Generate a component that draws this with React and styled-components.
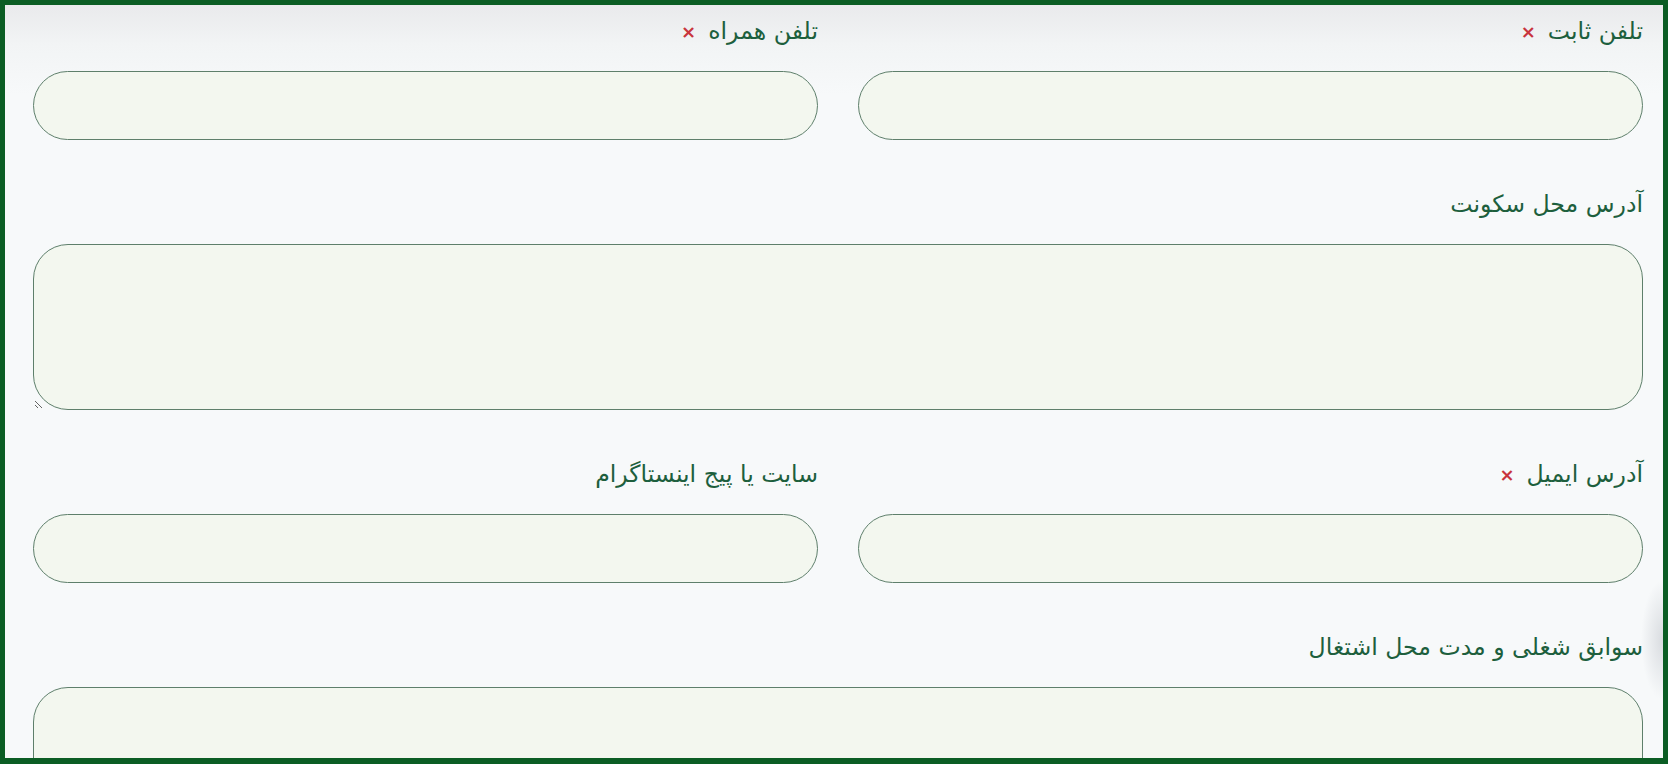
import React from "react";
import styled, { createGlobalStyle } from "styled-components";

const GlobalStyle = createGlobalStyle`
  html, body {
    margin: 0;
    padding: 0;
    height: 100%;
    overflow: hidden;
  }
  body {
    font-family: "DejaVu Sans", "Noto Sans", sans-serif;
  }
`;

const Frame = styled.div`
  box-sizing: border-box;
  height: 764px;
  border: 5px solid #0b5d24;
  border-bottom-width: 6px;
  overflow: hidden;
  background:
    radial-gradient(ellipse 22px 60px at 100% 635px, rgba(160, 165, 175, 0.35), rgba(160, 165, 175, 0) 100%),
    linear-gradient(180deg, #e9eaec 0px, #f2f4f5 40px, #f7f9fa 90px, #f7f9fa 100%);
`;

const Form = styled.form`
  direction: rtl;
  display: flex;
  flex-direction: column;
  gap: 44px;
  padding: 6px 20px 0 28px;
`;

const Row = styled.div`
  display: grid;
  grid-template-columns: 1fr 1fr;
  gap: 40px;
`;

const Field = styled.div`
  display: flex;
  flex-direction: column;
`;

const Label = styled.label`
  display: flex;
  align-items: center;
  gap: 12px;
  height: 40px;
  margin-bottom: 20px;
  color: #1d5f3d;
  font-size: 23.6px;
  white-space: nowrap;
`;

const Required = styled.span`
  color: #c8343c;
  font-size: 18px;
  font-weight: bold;
  font-family: "DejaVu Sans", sans-serif;
`;

const Input = styled.input`
  box-sizing: border-box;
  height: 69px;
  width: 100%;
  border: 1px solid #5e7f6b;
  border-radius: 35px;
  background: #f3f7ef;
  padding: 0 24px;
  font-size: 18px;
  outline: none;
  direction: rtl;
`;

const TextArea = styled.textarea`
  box-sizing: border-box;
  display: block;
  height: 166px;
  width: 100%;
  border: 1px solid #5e7f6b;
  border-radius: 35px;
  background: #f3f7ef;
  padding: 16px 24px;
  font-size: 18px;
  outline: none;
  direction: rtl;
`;

const FieldLabel = ({ text, required }) => (
  <Label>
    <span>{text}</span>
    {required && <Required>×</Required>}
  </Label>
);

export default function App() {
  return (
    <>
      <GlobalStyle />
      <Frame>
        <Form>
          <Row>
            <Field>
              <FieldLabel text="تلفن ثابت" required />
              <Input type="text" />
            </Field>
            <Field>
              <FieldLabel text="تلفن همراه" required />
              <Input type="text" />
            </Field>
          </Row>
          <Field>
            <FieldLabel text="آدرس محل سکونت" />
            <TextArea />
          </Field>
          <Row>
            <Field>
              <FieldLabel text="آدرس ایمیل" required />
              <Input type="email" />
            </Field>
            <Field>
              <FieldLabel text="سایت یا پیج اینستاگرام" />
              <Input type="text" />
            </Field>
          </Row>
          <Field>
            <FieldLabel text="سوابق شغلی و مدت محل اشتغال" />
            <TextArea />
          </Field>
        </Form>
      </Frame>
    </>
  );
}
